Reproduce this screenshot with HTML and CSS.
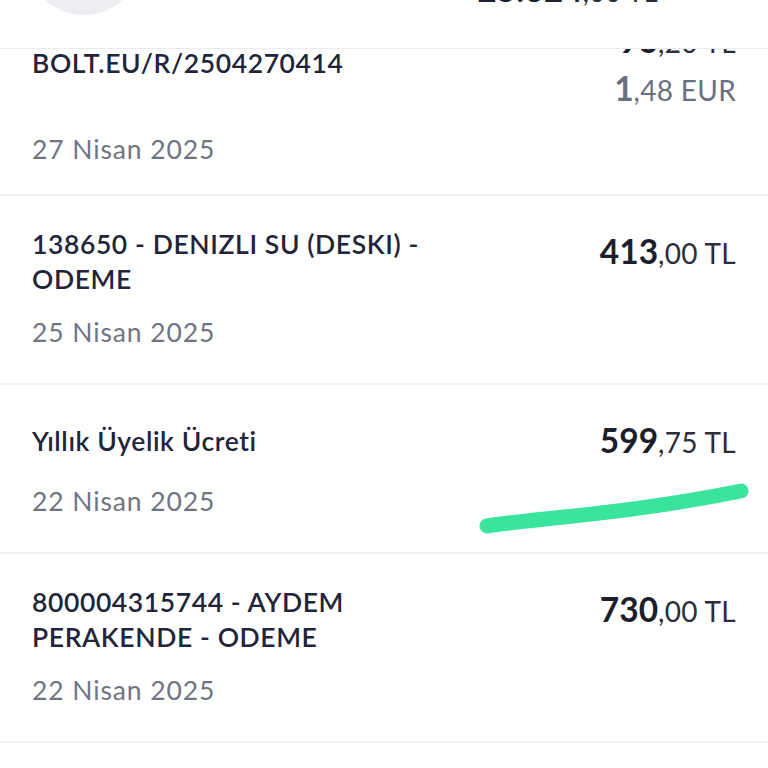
FILE: index.html
```html
<!DOCTYPE html>
<html lang="tr">

<head>
    <meta charset="UTF-8">
    <meta name="viewport" content="width=device-width, initial-scale=1.0">
    <title>Hesap Hareketleri</title>
    <link rel="stylesheet" href="styles.css">
</head>

<body>
    <!-- Collapsed summary bar, scrolled up over the list -->
    <header class="summary-bar">
        <div class="summary">
            <div class="avatar"></div>
            <div class="total"><b>25.624</b>,00 TL</div>
        </div>
    </header>

    <!-- Transaction list -->
    <main class="tx-list">
        <div class="tx">
            <div class="tx-top">
                <div class="tx-title">BOLT.EU/R/2504270414</div>
                <div class="tx-amounts">
                    <div class="amount"><b>93</b>,20 TL</div>
                    <div class="amount amount-foreign"><b>1</b>,48 EUR</div>
                </div>
            </div>
            <div class="tx-date">27 Nisan 2025</div>
        </div>

        <div class="tx">
            <div class="tx-top">
                <div class="tx-title">138650 - DENIZLI SU (DESKI) - ODEME</div>
                <div class="amount"><b>413</b>,00 TL</div>
            </div>
            <div class="tx-date">25 Nisan 2025</div>
        </div>

        <div class="tx">
            <div class="tx-top">
                <div class="tx-title">Yıllık Üyelik Ücreti</div>
                <div class="amount"><b>599</b>,75 TL</div>
            </div>
            <div class="tx-date">22 Nisan 2025</div>
            <!-- hand-drawn highlight -->
            <svg class="scribble" width="272" height="52" viewBox="0 0 272 52">
                <path d="M9 44 C50 37 150 32 263 9" fill="none" stroke="#3ae49c" stroke-width="15" stroke-linecap="round"/>
            </svg>
        </div>

        <div class="tx">
            <div class="tx-top">
                <div class="tx-title">800004315744 - AYDEM PERAKENDE - ODEME</div>
                <div class="amount"><b>730</b>,00 TL</div>
            </div>
            <div class="tx-date">22 Nisan 2025</div>
        </div>
    </main>
</body>

</html>
```

FILE: styles.css
```css
/* Page */
body {
    margin: 0;
    background-color: #ffffff;
    color: #1f2233;
    font-family: 'Lato', 'Noto Sans', sans-serif;
    overflow: hidden;
}

.summary-bar {
    position: fixed;
    top: 0;
    left: 0;
    right: 0;
    height: 48px;
    overflow: hidden;
    background-color: #ffffff;
    border-bottom: 1px solid #ebebef;
    z-index: 2;
}

.summary {
    display: flex;
    align-items: flex-end;
    justify-content: space-between;
    margin-top: -99px;
    padding: 0 110px 0 27px;
}

.avatar {
    width: 114px;
    height: 114px;
    border-radius: 50%;
    background-color: #eeeef2;
}

.total {
    font-size: 27px;
    line-height: 32px;
    margin-bottom: 7px;
    color: #2a2d3a;
    letter-spacing: 0.3px;
}

.total b {
    font-size: 33px;
    line-height: 1;
    color: #1c1f2e;
    font-weight: 700;
}

/* List is scrolled a little: first row sits under the bar */
.tx-list {
    margin-top: -19px;
}

.tx {
    position: relative;
    padding: 31px 32px 33px;
    border-bottom: 2px solid #f1f1f4;
}

.tx:first-child {
    padding-bottom: 27px;
}

.tx-top {
    display: flex;
    align-items: center;
    justify-content: space-between;
    gap: 24px;
}

.tx-title {
    max-width: 450px;
    font-size: 26.5px;
    line-height: 35px;
    font-weight: 600;
    letter-spacing: 0.6px;
    color: #22253a;
}

.tx-amounts {
    align-self: flex-start;
    display: flex;
    flex-direction: column;
    align-items: flex-end;
}

.amount {
    align-self: flex-start;
    padding-top: 3px;
    font-size: 28px;
    line-height: 47px;
    letter-spacing: 0.3px;
    white-space: nowrap;
    color: #2b2e3b;
}

.tx-amounts .amount {
    align-self: auto;
}

.tx-amounts .amount:first-child {
    padding-top: 7px;
}

.tx-amounts .amount-foreign {
    padding-top: 1px;
}

.amount b {
    font-size: 33.5px;
    line-height: 1;
    font-weight: 700;
    letter-spacing: 0;
    color: #1c1f2b;
}

.amount-foreign,
.amount-foreign b {
    color: #6c6f82;
}

.tx-date {
    margin-top: 18px;
    font-size: 26.5px;
    line-height: 35px;
    letter-spacing: 0.9px;
    color: #717483;
}

/* Green marker stroke over the third row */
.scribble {
    position: absolute;
    left: 478px;
    top: 97px;
}
```
